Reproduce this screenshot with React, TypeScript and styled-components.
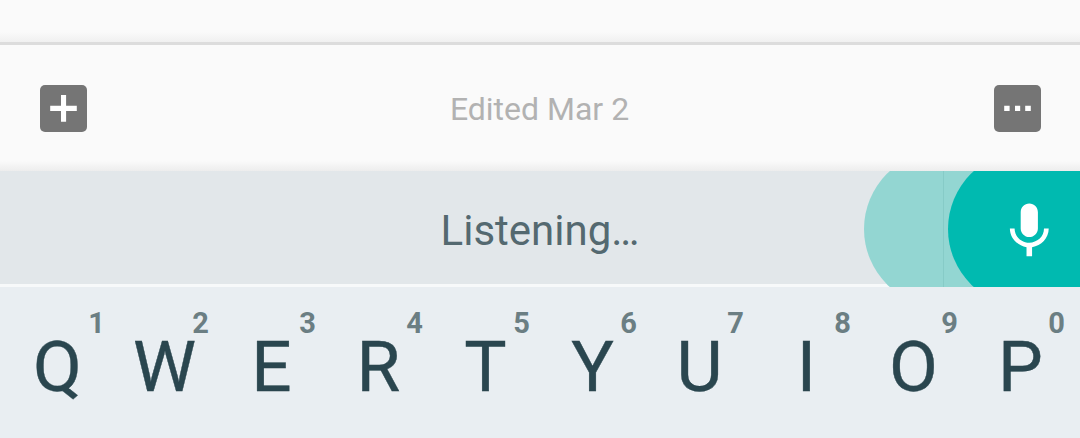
import styled, { createGlobalStyle } from 'styled-components';

const keys = [
  { letter: 'Q', hint: '1' },
  { letter: 'W', hint: '2' },
  { letter: 'E', hint: '3' },
  { letter: 'R', hint: '4' },
  { letter: 'T', hint: '5' },
  { letter: 'Y', hint: '6' },
  { letter: 'U', hint: '7' },
  { letter: 'I', hint: '8' },
  { letter: 'O', hint: '9' },
  { letter: 'P', hint: '0' },
]

function App() {
  return (
    <Screen>
      <GlobalStyle />
      <NoteBody />

      <Toolbar>
        <IconButton aria-label='Add'>
          <svg width='47' height='47' viewBox='0 0 47 47' fill='#fff'>
            <path d='M21 10.1h5.1v10.6h10.7V26H26.1v10.8H21V26H10.2v-5.3H21z' />
          </svg>
        </IconButton>
        <EditedText>Edited Mar 2</EditedText>
        <IconButton aria-label='More'>
          <svg width='47' height='47' viewBox='0 0 47 47' fill='#fff'>
            <path d='M10.2 20.7h5.4V26h-5.4zM21 20.7h5.2V26H21zM31.2 20.7h5.6V26h-5.6z' />
          </svg>
        </IconButton>
      </Toolbar>

      <VoiceBar>
        <ListeningText>Listening…</ListeningText>
        <Ripple />
        <RippleSeam />
        <MicButton aria-label='Voice input'>
          <svg width='66.6' height='66.6' viewBox='0 0 24 24' fill='#fff'>
            <path d='M12 14.1c1.72 0 3.1-1.4 3.1-3.1V5.1C15.1 3.4 13.72 2 12 2S8.9 3.4 8.9 5.1V11c0 1.7 1.38 3.1 3.1 3.1zM17.3 11c0 3-2.54 5.1-5.3 5.1S6.7 14 6.7 11H5c0 3.41 2.72 6.23 6 6.72V21h2v-3.28c3.28-.48 6-3.3 6-6.72z' />
          </svg>
        </MicButton>
      </VoiceBar>

      <KeyRow>
        {keys.map(({ letter, hint }) => (
          <Key key={letter}>
            <Hint $narrow={hint === '1'}>{hint}</Hint>
            <Letter>{letter}</Letter>
          </Key>
        ))}
      </KeyRow>
    </Screen>
  )
}

const GlobalStyle = createGlobalStyle`
  * {
    box-sizing: border-box;
  }
  body {
    margin: 0;
    font-family: Roboto, "Liberation Sans", sans-serif;
  }
  button {
    border: none;
    padding: 0;
  }
  svg {
    display: block;
  }
`;

const Screen = styled.div`
  display: flex;
  flex-direction: column;
  width: 1080px;
  height: 438px;
  overflow: hidden;
  background: #fafafa;
`;

const NoteBody = styled.div`
  height: 45px;
  border-bottom: 3px solid #dcdcdc;
  background: linear-gradient(#fafafa 32px, #f0f0f0 42px);
`;

const Toolbar = styled.div`
  display: flex;
  align-items: center;
  justify-content: space-between;
  height: 126px;
  padding: 0 39px 0 40px;
  background: linear-gradient(#fafafa 116px, #ededed 126px);
`;

const IconButton = styled.button`
  width: 47px;
  height: 47px;
  border-radius: 5px;
  background: #757575;
`;

const EditedText = styled.span`
  padding: 2px 2px 0 0;
  font-size: 32px;
  line-height: 38px;
  color: #b2b2b2;
`;

const VoiceBar = styled.div`
  position: relative;
  display: flex;
  justify-content: center;
  height: 116px;
  border-bottom: 3px solid #f7f9fa;
  background: #e2e7ea;
`;

const ListeningText = styled.span`
  padding-top: 35px;
  font-size: 42px;
  line-height: 50px;
  color: #546970;
`;

/* both ripples run past the edges of the bar and are cut by it */
const Ripple = styled.div`
  position: absolute;
  top: 0;
  right: 0;
  width: 216px;
  height: 116px;
  overflow: hidden;

  &::before {
    content: '';
    position: absolute;
    top: -20px;
    left: 0;
    width: 330px;
    height: 156px;
    border-radius: 78px;
    background: #93d6d2;
  }
`;

const RippleSeam = styled.div`
  position: absolute;
  top: 0;
  right: 136px;
  width: 1px;
  height: 116px;
  background: #86cbc7;
`;

const MicButton = styled.button`
  position: absolute;
  top: 0;
  right: 0;
  width: 132px;
  height: 116px;
  overflow: hidden;
  background: none;

  &::before {
    content: '';
    position: absolute;
    top: -20px;
    left: 0;
    width: 170px;
    height: 156px;
    border-radius: 78px;
    background: #00bab0;
  }

  svg {
    position: absolute;
    top: 27.4px;
    left: 47.8px;
  }
`;

const KeyRow = styled.div`
  display: flex;
  flex: 1;
  padding-left: 5px;
  background: #e9eef2;
`;

const Key = styled.div`
  display: flex;
  flex-direction: column;
  width: 107px;
  padding-top: 19px;
`;

const Hint = styled.span<{ $narrow: boolean }>`
  padding-right: ${({ $narrow }) => ($narrow ? 7 : 10)}px;
  text-align: right;
  font-size: 29px;
  font-weight: 700;
  line-height: 34px;
  color: #6b7e83;
`;

const Letter = styled.span`
  margin-top: -15px;
  padding-right: 2px;
  text-align: center;
  font-size: 71px;
  line-height: 84px;
  color: #2a464f;
  -webkit-text-stroke: 0.4px #2a464f;
`;

export default App;
